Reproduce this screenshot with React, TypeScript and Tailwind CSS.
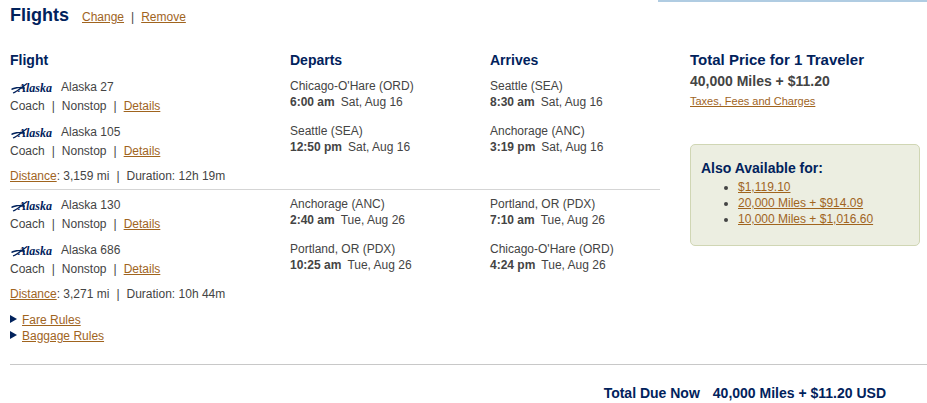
import type { ReactNode } from "react";

type Stop = { city: string; time: string; date: string };
type Leg = { flight: string; departs: Stop; arrives: Stop };
type Trip = { distance: string; duration: string; legs: Leg[] };

const trips: Trip[] = [
  {
    distance: "3,159 mi",
    duration: "12h 19m",
    legs: [
      {
        flight: "Alaska 27",
        departs: { city: "Chicago-O'Hare (ORD)", time: "6:00 am", date: "Sat, Aug 16" },
        arrives: { city: "Seattle (SEA)", time: "8:30 am", date: "Sat, Aug 16" },
      },
      {
        flight: "Alaska 105",
        departs: { city: "Seattle (SEA)", time: "12:50 pm", date: "Sat, Aug 16" },
        arrives: { city: "Anchorage (ANC)", time: "3:19 pm", date: "Sat, Aug 16" },
      },
    ],
  },
  {
    distance: "3,271 mi",
    duration: "10h 44m",
    legs: [
      {
        flight: "Alaska 130",
        departs: { city: "Anchorage (ANC)", time: "2:40 am", date: "Tue, Aug 26" },
        arrives: { city: "Portland, OR (PDX)", time: "7:10 am", date: "Tue, Aug 26" },
      },
      {
        flight: "Alaska 686",
        departs: { city: "Portland, OR (PDX)", time: "10:25 am", date: "Tue, Aug 26" },
        arrives: { city: "Chicago-O'Hare (ORD)", time: "4:24 pm", date: "Tue, Aug 26" },
      },
    ],
  },
];

const otherPrices = ["$1,119.10", "20,000 Miles + $914.09", "10,000 Miles + $1,016.60"];

const Link = ({ children }: { children: ReactNode }) => (
  <a href="#" className="text-[#a0641e] underline">
    {children}
  </a>
);

const Bar = () => <span className="mx-[7px]">|</span>;

const AlaskaLogo = () => (
  <svg width="44" height="18" viewBox="0 0 44 18" className="shrink-0" fill="none">
    <path d="M1 11 C4 9 8 8.5 15 9.5 L15 10.7 C9 10 6 10.4 2 12 Z" fill="#01225c" />
    <path d="M3 15 C7 13.5 12 9 17 5.5" stroke="#01225c" strokeWidth="1.3" />
    <text
      x="8"
      y="14"
      fill="#01225c"
      fontFamily="'Liberation Serif', serif"
      fontSize="12"
      fontWeight="bold"
      fontStyle="italic"
    >
      Alaska
    </text>
  </svg>
);

const StopCell = ({ stop }: { stop: Stop }) => (
  <td className="align-top">
    <p>{stop.city}</p>
    <p>
      <b className="mr-[6px]">{stop.time}</b>
      {stop.date}
    </p>
  </td>
);

const TripRows = ({ trip, first }: { trip: Trip; first: boolean }) => (
  <tbody>
    {!first && (
      <tr>
        <td colSpan={3} className="h-[12px] pt-[5px] align-top">
          <div className="h-[7px] border-t border-[#d5d5d5]" />
        </td>
      </tr>
    )}
    {trip.legs.map((leg) => (
      <tr key={leg.flight} className="h-[45px]">
        <td className="align-top">
          <div className="flex h-[18px] items-center gap-[7px]">
            <AlaskaLogo />
            <span>{leg.flight}</span>
          </div>
          <p className="leading-[20px]">
            Coach
            <Bar />
            Nonstop
            <Bar />
            <Link>Details</Link>
          </p>
        </td>
        <StopCell stop={leg.departs} />
        <StopCell stop={leg.arrives} />
      </tr>
    ))}
    <tr>
      <td colSpan={3}>
        <Link>Distance</Link>: {trip.distance}
        <Bar />
        Duration: {trip.duration}
      </td>
    </tr>
  </tbody>
);

const Rule = ({ label }: { label: string }) => (
  <li className="flex">
    <svg width="7" height="8" viewBox="0 0 7 8" className="mt-[3px] mr-[5px]">
      <path d="M0 0 L7 4 L0 8 Z" fill="#01225c" />
    </svg>
    <Link>{label}</Link>
  </li>
);

const App = () => {
  return (
    <main className="bg-white pb-[2px] font-['Liberation_Sans',Arial,sans-serif] text-[12px] leading-[16px] text-[#444444]">
      <div className="ml-auto h-[2px] w-[29%] bg-[#b0cce2]" />

      <header className="flex items-baseline pt-[3px] pl-[10px]">
        <h1 className="mr-[13px] text-[18px] leading-[20px] font-bold text-[#01225c]">Flights</h1>
        <p>
          <Link>Change</Link>
          <Bar />
          <Link>Remove</Link>
        </p>
      </header>

      <div className="flex items-start gap-[30px] pt-[25px] pr-[7px] pl-[10px]">
        <section className="w-[650px]">
          <table className="w-full table-fixed text-left">
            <thead>
              <tr className="h-[28px] align-top text-[14px] leading-[20px] text-[#01225c]">
                <th className="w-[280px]">Flight</th>
                <th className="w-[200px]">Departs</th>
                <th>Arrives</th>
              </tr>
            </thead>
            {trips.map((trip, i) => (
              <TripRows key={trip.distance} trip={trip} first={i === 0} />
            ))}
          </table>

          <ul className="mt-[10px]">
            <Rule label="Fare Rules" />
            <Rule label="Baggage Rules" />
          </ul>
        </section>

        <aside className="flex-1">
          <h2 className="text-[15px] leading-[20px] font-bold text-[#01225c]">
            Total Price for 1 Traveler
          </h2>
          <p className="text-[14px] leading-[22px] font-bold">40,000 Miles + $11.20</p>
          <p className="text-[11px] leading-[18px]">
            <Link>Taxes, Fees and Charges</Link>
          </p>

          <div className="mt-[34px] rounded-[5px] border border-[#d0d6b4] bg-[#eceee1] px-[10px] pt-[13px] pb-[18px]">
            <h3 className="mb-px text-[14px] leading-[20px] font-bold text-[#01225c]">
              Also Available for:
            </h3>
            <ul className="list-disc pl-[37px]">
              {otherPrices.map((price) => (
                <li key={price}>
                  <Link>{price}</Link>
                </li>
              ))}
            </ul>
          </div>
        </aside>
      </div>

      <footer className="mt-[20px] ml-[10px] flex justify-end gap-[13px] border-t border-[#c8c8c8] pt-[18px] pr-[41px] text-[14px] leading-[20px] font-bold text-[#01225c]">
        <span>Total Due Now</span>
        <span>40,000 Miles + $11.20 USD</span>
      </footer>
    </main>
  );
};

export default App;
